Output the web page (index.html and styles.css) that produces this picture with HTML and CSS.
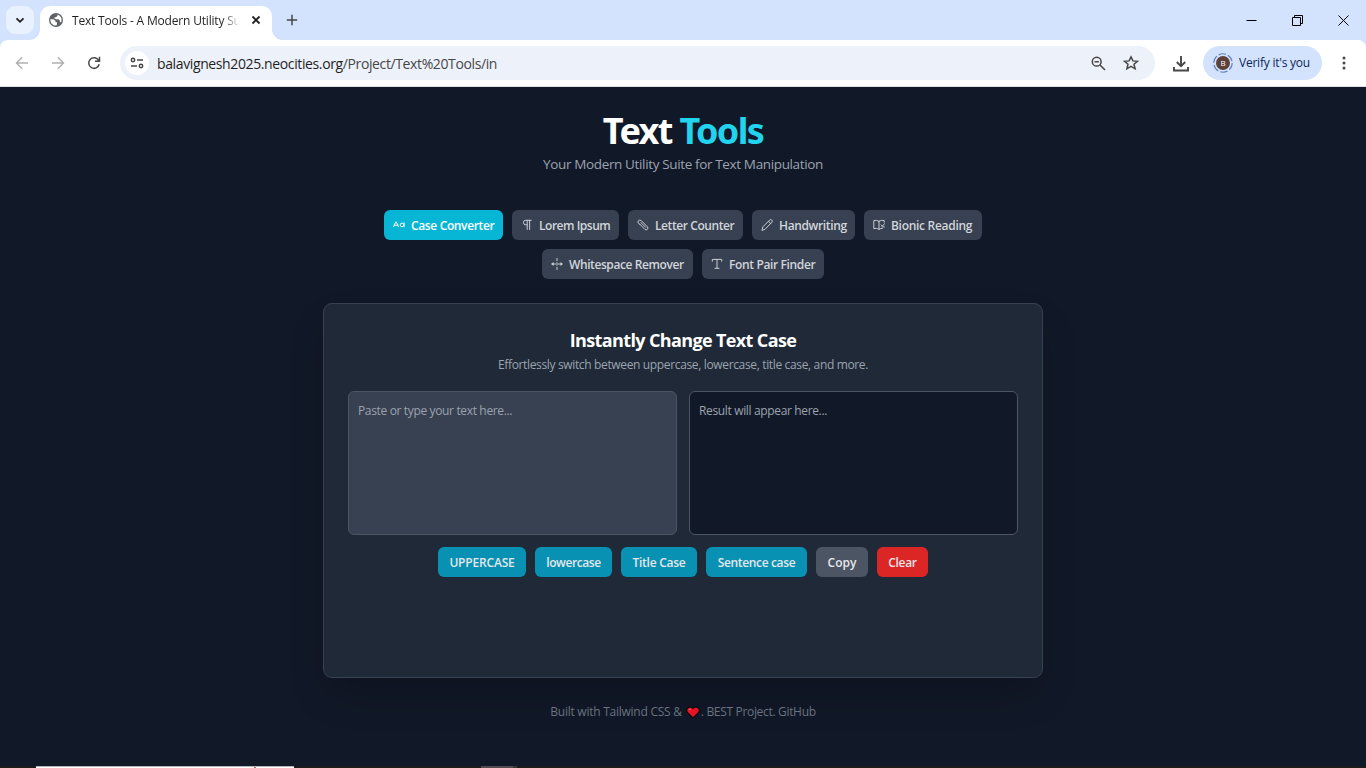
FILE: index.html
```html
<!DOCTYPE html>
<html lang="en">
<head>
<meta charset="utf-8">
<title>Text Tools - A Modern Utility Suite</title>
<link rel="stylesheet" href="styles.css">
</head>
<body>
<div class="chrome">
<div class="tabstrip">
  <div class="tab-search"><svg width="10" height="10" viewBox="0 0 10 10"><path d="M1.500 3.300 5 6.800l3.500-3.500" class="ink heavy"/></svg></div>
  <div class="tab">
    <svg width="14" height="14" viewBox="0 0 14 14"><circle cx="7" cy="7" r="7" fill="#5f6368"/><path d="M1.400 6.200H4.500L6.500 8V9.300H8V11.500L7 12.600A5.600 5.600 0 0 1 1.400 6.200ZM8.500 1.500V2.700L7 4.200H5.500V5.600L7 6.200H9.500L10.800 7.600V8.800L12 9.400A5.600 5.600 0 0 0 8.500 1.500Z" fill="#fff"/></svg>
    <span class="tab-title">Text Tools - A Modern Utility Suite</span>
    <svg width="10" height="10" viewBox="0 0 10 10"><path d="M1.500 1.500l7 7M8.500 1.500l-7 7" class="ink heavy"/></svg>
  </div>
  <svg class="newtab" width="12" height="12" viewBox="0 0 12 12"><path d="M6 .800v10.400M.800 6h10.400" class="ink"/></svg>
  <div class="window-controls">
    <svg width="11" height="11" viewBox="0 0 11 11"><path d="M.500 5.500h10" class="win"/></svg>
    <svg width="11" height="11" viewBox="0 0 11 11"><path d="M.500 2.500h8v8h-8zM2.500 2.500v-2h8v8h-2" class="win"/></svg>
    <svg width="11" height="11" viewBox="0 0 11 11"><path d="M.500.500l10 10M10.500.500l-10 10" class="win"/></svg>
  </div>
</div>
<div class="toolbar">
  <div class="nav-icons">
    <svg width="14" height="14" viewBox="0 0 14 14"><path d="M13 7H2M7.200 1.300 1.500 7l5.700 5.700" class="ink faded"/></svg>
    <svg width="14" height="14" viewBox="0 0 14 14"><path d="M1 7h11M6.800 1.300 12.500 7l-5.700 5.700" class="ink faded"/></svg>
    <svg width="14" height="14" viewBox="0 0 14 14"><path d="M12.200 8.300A5.300 5.300 0 1 1 11.700 4.500M12.500.800v4.400H8" class="ink"/></svg>
  </div>
  <div class="omnibox">
    <div class="site-info"><svg width="14" height="12" viewBox="0 0 14 12"><circle cx="3" cy="3" r="1.700" class="ink"/><path d="M7 3h6M1 9h6" class="ink"/><circle cx="11" cy="9" r="1.700" class="ink"/></svg></div>
    <div class="url">balavignesh2025.neocities.org<span class="path">/Project/Text%20Tools/in</span></div>
    <svg class="lens" width="15" height="15" viewBox="0 0 15 15"><circle cx="5.700" cy="5.700" r="4.400" class="ink"/><path d="M9 9l5 5M3.500 5.700h4.400" class="ink"/></svg>
    <svg class="star" width="16" height="16" viewBox="0 0 16 16"><path d="M8 1.900l1.900 4 4.600.4-3.500 3 1.100 4.500L8 11.400l-4.100 2.400L5 9.300l-3.500-3 4.600-.4z" class="ink"/></svg>
  </div>
  <svg class="download" width="18" height="17" viewBox="0 0 18 17"><path d="M9 1v10M4.800 7 9 11.200 13.200 7M2 12v3.500h14V12" stroke="#474747" stroke-width="1.900" fill="none"/></svg>
  <div class="verify"><svg width="20" height="20" viewBox="0 0 20 20"><circle cx="10" cy="10" r="9.200" fill="none" stroke="#5b80bb" stroke-width="1.100" stroke-dasharray="7.500 2.130"/><circle cx="10" cy="10" r="7" fill="#5d4037"/><text x="10" y="12.700" class="avatar-letter">B</text></svg><span>Verify it's you</span></div>
  <svg class="more" width="4" height="14" viewBox="0 0 4 14"><g fill="#474747"><circle cx="2" cy="2" r="1.500"/><circle cx="2" cy="7" r="1.500"/><circle cx="2" cy="12" r="1.500"/></g></svg>
</div>
</div>
<main class="page">
  <header>
    <h1>Text <span class="accent">Tools</span></h1>
    <p class="tagline">Your Modern Utility Suite for Text Manipulation</p>
  </header>
  <nav class="tools">
    <a class="tool tool-case active"><svg width="12" height="12" viewBox="0 0 12 12"><path d="M.500 7.700 2.800 2.900h.4l2.300 4.800M1.300 6.200h3.400"/><circle cx="9" cy="5.900" r="1.800"/><path d="M11.100 3.900v3.900"/></svg><span>Case Converter</span></a>
    <a class="tool tool-lorem"><svg width="12" height="12" viewBox="0 0 12 12"><path d="M10.200 1.300H4.700a2.200 2.200 0 0 0 0 4.500h1.400M6.200 1.300v9.200M8.600 1.300v9.200"/></svg><span>Lorem Ipsum</span></a>
    <a class="tool tool-letter"><svg width="12" height="12" viewBox="0 0 12 12"><path d="M3 5.400 7.900 10.300a1.700 1.700 0 0 0 2.500-2.500L4.300 1.700A1.900 1.900 0 0 0 1.500 4.400l1.500 1M4 3.600l4.500 4.600"/></svg><span>Letter Counter</span></a>
    <a class="tool tool-hand"><svg width="12" height="12" viewBox="0 0 12 12"><path d="M1 11l.9-3.200 6.700-6.700a1.300 1.300 0 0 1 2.200 2.200L4.200 10.100zM7.500 2.300l2.200 2.200"/></svg><span>Handwriting</span></a>
    <a class="tool tool-bionic"><svg width="12" height="12" viewBox="0 0 12 12"><path d="M6 2.300C4.500 1.300 2.500 1.200.800 1.600v8c1.700-.4 3.700-.3 5.200.7 1-.7 2.200-.9 3.200-.9M6 2.300v8M6 2.300c1.500-1 3.500-1.100 5.200-.7v1.600M8 5.900l1.300 1.300 2.200-2.500M9 7.900h2.300"/></svg><span>Bionic Reading</span></a>
    <a class="tool tool-space"><svg width="12" height="12" viewBox="0 0 12 12"><path d="M6 .500v2.200M6 4.700v2.600M6 9.300v2.200M1 6h3.700M7.300 6H11"/><path d="M.200 6 2.500 4v4zM11.800 6 9.500 4v4z" class="solid"/></svg><span>Whitespace Remover</span></a>
    <a class="tool tool-font"><svg width="12" height="12" viewBox="0 0 12 12"><path d="M1.300 3.200V1.400h9.400v1.800M6 1.400v8.900M4 10.300h4"/></svg><span>Font Pair Finder</span></a>
  </nav>
  <section class="card">
    <h2>Instantly Change Text Case</h2>
    <p class="lead">Effortlessly switch between uppercase, lowercase, title case, and more.</p>
    <div class="fields">
      <div class="field">Paste or type your text here...</div>
      <div class="field result">Result will appear here...</div>
    </div>
    <div class="actions">
      <a class="btn btn-upper">UPPERCASE</a><a class="btn btn-lower">lowercase</a><a class="btn btn-title">Title Case</a><a class="btn btn-sentence">Sentence case</a><a class="btn btn-copy">Copy</a><a class="btn btn-clear">Clear</a>
    </div>
  </section>
  <footer>
    <span class="built">Built with Tailwind CSS &amp;</span>
    <svg width="14" height="13" viewBox="0 0 14 13"><path d="M7 12 1.400 6.400C-.8 3.200 3.300-1.200 7 2.600c3.700-3.800 7.800.6 5.600 3.800z" fill="#e81224" stroke="#0a0a0c" stroke-width="1.100"/><path d="M3 4.200c.3-.8 1-1.100 1.700-.8" stroke="#ff8d96" fill="none"/></svg>
    <span class="credit">. BEST Project. GitHub</span>
  </footer>
</main>
<div class="taskbar"><div class="task-search"><i></i></div><div class="task-app"></div><div class="task-edge"></div></div>
</body>
</html>
```
FILE: styles.css
```css
* { box-sizing: border-box; }
body {
  margin: 0;
  height: 768px;
  overflow: hidden;
  display: flex;
  flex-direction: column;
  background: #111827;
  font: 12px/16px "Open Sans", sans-serif;
  white-space: nowrap;
}
svg { display: block; flex: none; }
h1, h2, p { margin: 0; }

/* Browser frame */
.chrome { flex: none; background: #d3e3fd; }
.ink { fill: none; stroke: #474747; stroke-width: 1.5; }
.heavy { stroke: #1f1f1f; stroke-width: 1.8; }
.faded { stroke: #b1b1b1; }
.win { fill: none; stroke: #000; }
.tabstrip {
  display: flex;
  height: 40px;
  padding: 6px 0 0 6px;
}
.tab-search {
  display: grid;
  place-items: center;
  width: 28px;
  height: 28px;
  border-radius: 9px;
  background: #e9f1fe;
}
.tab {
  position: relative;
  display: flex;
  align-items: center;
  width: 232px;
  height: 34px;
  margin-left: 6px;
  padding: 0 11px 6px 9px;
  border-radius: 10px 10px 0 0;
  background: #fff;
}
.tab::before, .tab::after {
  content: "";
  position: absolute;
  bottom: 0;
  width: 10px;
  height: 10px;
}
.tab::before { left: -10px; background: radial-gradient(circle at 0 0, transparent 9.5px, #fff 10px); }
.tab::after { right: -10px; background: radial-gradient(circle at 100% 0, transparent 9.5px, #fff 10px); }
.tab-title {
  width: 168px;
  margin: 0 11px 0 9px;
  padding-top: 1px;
  overflow: hidden;
  color: #1f1f1f;
  letter-spacing: -.18px;
  -webkit-mask-image: linear-gradient(90deg, #000 150px, transparent 168px);
  mask-image: linear-gradient(90deg, #000 150px, transparent 168px);
}
.newtab { margin: 8px 0 0 14px; }
.window-controls { display: flex; gap: 35px; margin: 9px 17px 0 auto; }
.toolbar {
  display: flex;
  align-items: center;
  height: 47px;
  border-bottom: 1px solid #dfe1e5;
  border-radius: 8px 8px 0 0;
  background: #fff;
}
.nav-icons { display: flex; gap: 22px; margin-left: 15px; }
.omnibox {
  display: flex;
  align-items: center;
  width: 1035px;
  height: 34px;
  margin-left: 19px;
  padding-left: 5px;
  border-radius: 17px;
  background: #edf1fa;
}
.site-info {
  display: grid;
  place-items: center;
  width: 24px;
  height: 24px;
  border-radius: 50%;
  background: #fff;
}
.url { margin: 0 auto 0 8px; padding-top: 1px; color: #1f1f1f; font-size: 14px; letter-spacing: -.38px; }
.path { color: #474747; }
.lens { margin-right: 17px; }
.star { margin-right: 16px; }
.download { margin-left: 17px; }
.verify {
  display: flex;
  align-items: center;
  width: 119px;
  height: 34px;
  margin-left: 13px;
  padding-left: 10px;
  gap: 6px;
  border-radius: 17px;
  background: #d3e3fd;
  color: #0c2657;
  letter-spacing: -.23px;
}
.avatar-letter { font-size: 8px; fill: #fff; text-anchor: middle; }
.more { margin-left: 20px; }

/* Page */
.page {
  display: flex;
  flex: 1;
  flex-direction: column;
  align-items: center;
  min-height: 0;
  padding-top: 24px;
}
header { text-align: center; }
h1 { color: #fff; font: bold 36px/40px "Noto Sans", sans-serif; letter-spacing: -1.65px; }
.accent { color: #22d3ee; }
.tagline { margin-top: 3px; color: #9ca3af; font-size: 13.5px; line-height: 21px; letter-spacing: -.36px; }
.tools {
  display: flex;
  flex-wrap: wrap;
  justify-content: center;
  gap: 9px;
  width: 720px;
  margin-top: 35px;
}
.tool {
  display: flex;
  align-items: center;
  gap: 6px;
  height: 30px;
  padding-left: 9px;
  border-radius: 6px;
  background: #374151;
  color: #d1d5db;
  font-weight: 600;
}
.tool span { padding-top: 2px; }
.tool svg { fill: none; stroke: currentColor; stroke-width: .95; stroke-linecap: round; stroke-linejoin: round; }
.tool .solid { fill: currentColor; stroke: none; }
.active { background: #06b6d4; color: #fff; }
.tool-case { width: 119px; letter-spacing: -.36px; }
.tool-lorem { width: 107px; letter-spacing: -.48px; }
.tool-letter { width: 115px; letter-spacing: -.42px; }
.tool-hand { width: 103px; letter-spacing: -.37px; }
.tool-bionic { width: 118px; letter-spacing: -.29px; }
.tool-space { width: 151px; letter-spacing: -.41px; }
.tool-font { width: 122px; letter-spacing: -.36px; }
.card {
  width: 720px;
  height: 375px;
  margin-top: 24px;
  padding: 24px;
  border: 1px solid #374151;
  border-radius: 9px;
  background: #1f2937;
  box-shadow: 0 19px 38px -9px rgba(0, 0, 0, .25);
  text-align: center;
}
h2 { color: #fff; font-size: 18px; line-height: 24px; letter-spacing: -.63px; }
.lead { margin-top: 4px; color: #9ca3af; line-height: 18px; letter-spacing: -.35px; }
.fields { display: flex; gap: 12px; margin-top: 17px; }
.field {
  flex: 1;
  height: 144px;
  padding: 11px 9px;
  border: 1px solid #4b5563;
  border-radius: 6px;
  background: #374151;
  color: #9ca3af;
  text-align: left;
  letter-spacing: -.35px;
}
.result { background: #111827; }
.actions { display: flex; justify-content: center; gap: 9px; margin-top: 12px; }
.btn {
  height: 30px;
  border-radius: 6px;
  background: #0891b2;
  color: #e5e7eb;
  font-weight: 600;
  line-height: 32px;
}
.btn-upper { width: 88px; letter-spacing: -.18px; }
.btn-lower { width: 77px; letter-spacing: -.4px; }
.btn-title { width: 76px; letter-spacing: -.25px; }
.btn-sentence { width: 101px; letter-spacing: -.34px; }
.btn-copy { width: 52px; background: #4b5563; }
.btn-clear { width: 51px; background: #dc2626; letter-spacing: -.35px; }
footer { display: flex; align-items: center; margin-top: 26px; color: #6b7280; }
.built { letter-spacing: -.25px; }
.credit { letter-spacing: -.32px; }
footer svg { margin: 0 1px 0 4px; }

/* Top edge of the desktop taskbar */
.taskbar { display: flex; flex: none; height: 2px; padding-left: 36px; background: #1d1a1b; }
.task-search { width: 258px; border-top: 1px solid #b9b4bb; background: #fff; }
.task-search i { display: block; width: 2px; height: 1px; margin-left: 218px; background: #a07868; }
.task-app { width: 32px; margin-left: 187px; background: #504c4f; }
.task-edge { width: 4px; background: #3a3638; }
```
